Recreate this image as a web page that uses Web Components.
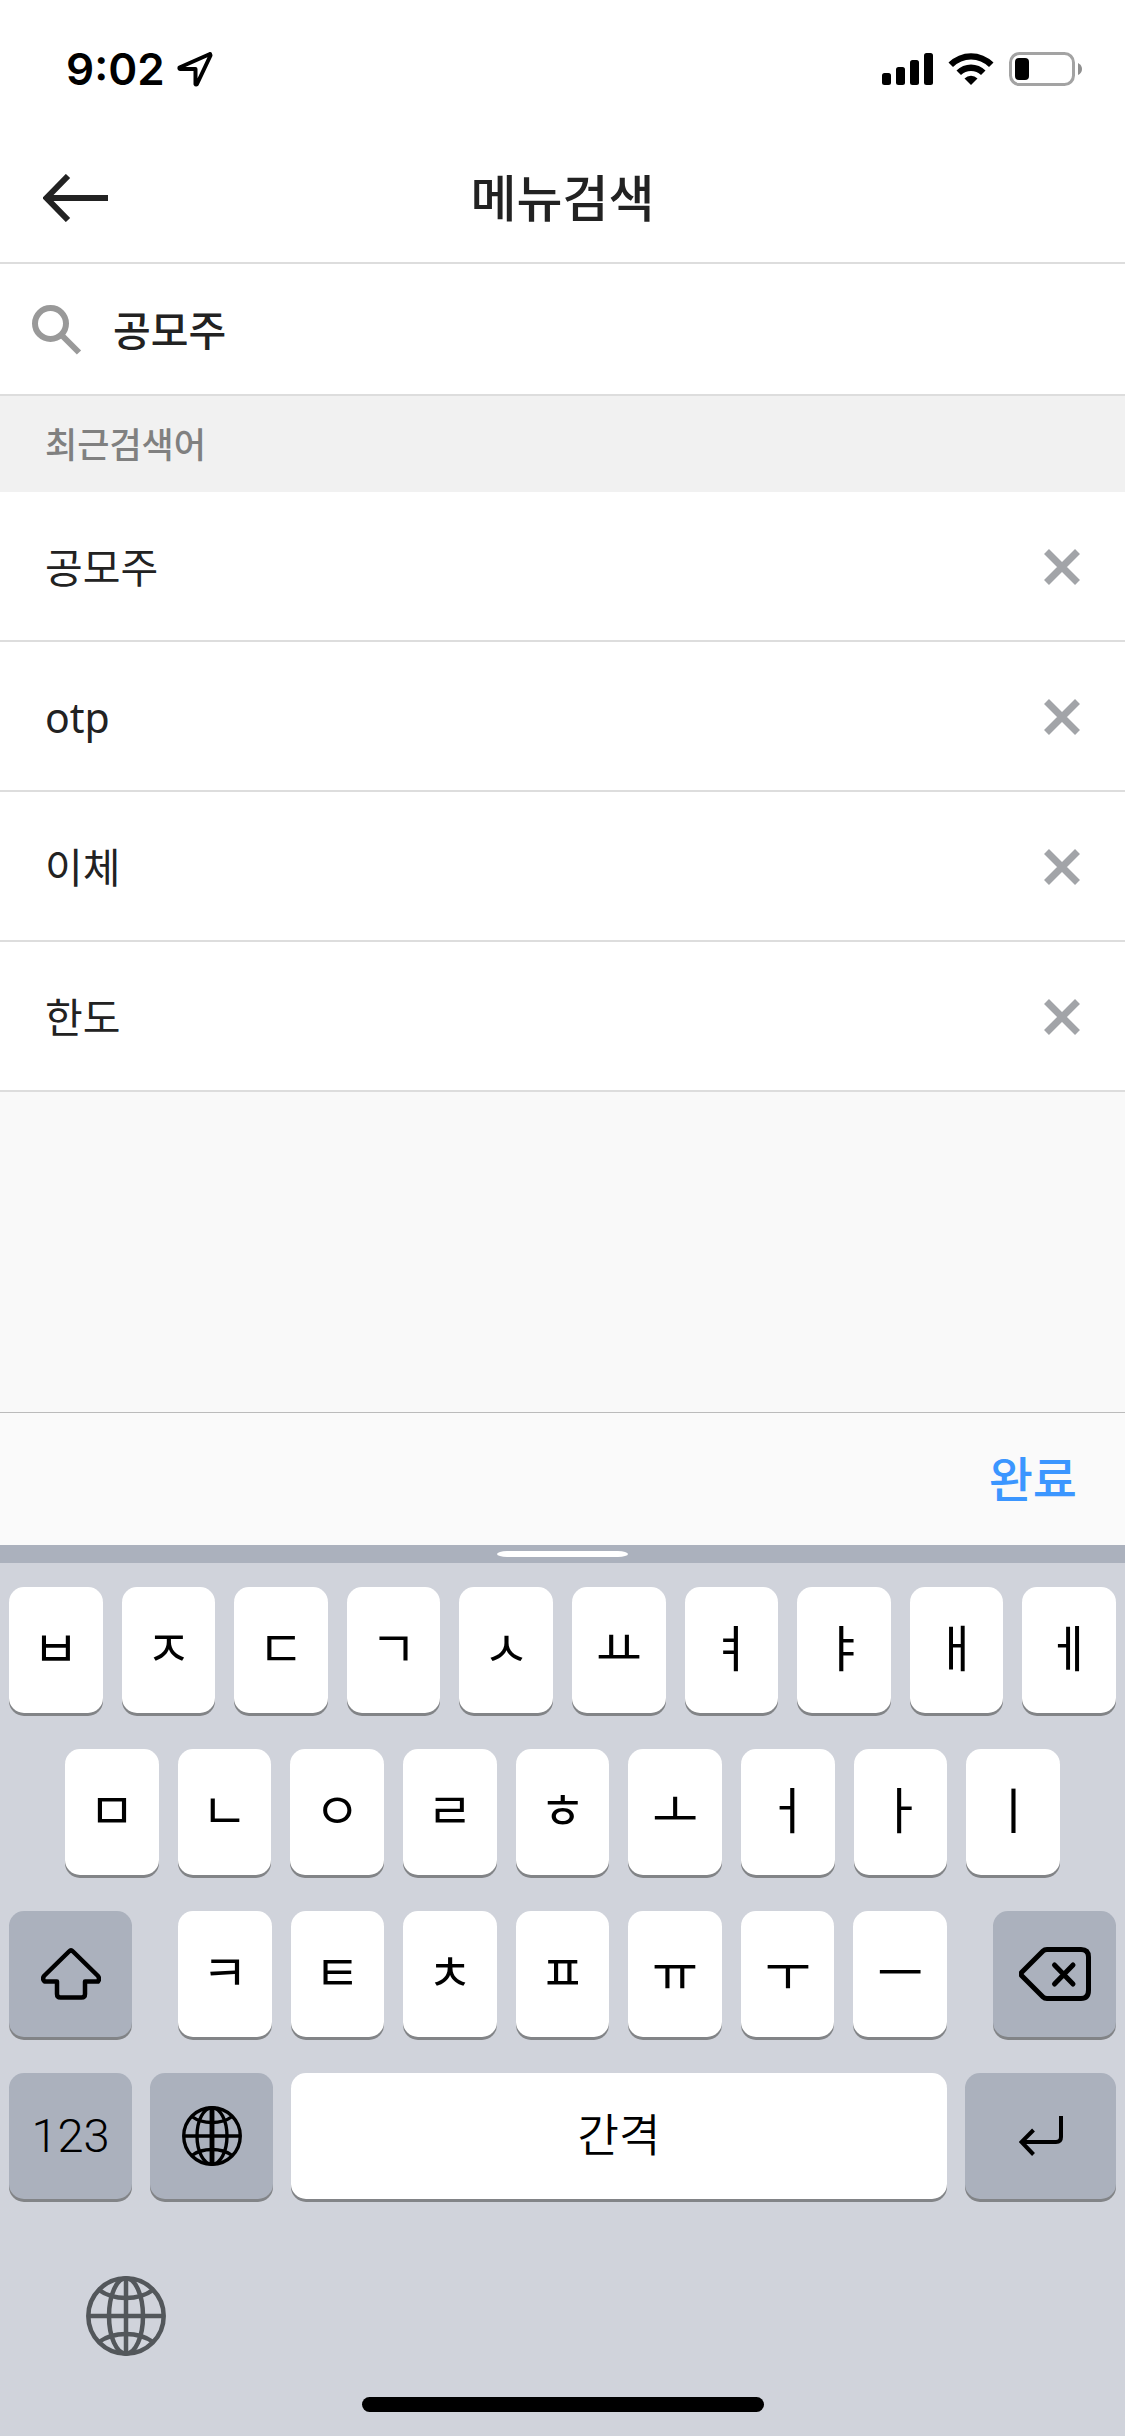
<!DOCTYPE html>
<html lang="ko">
<head>
<meta charset="utf-8">
<meta name="viewport" content="width=device-width, initial-scale=1">
<title>메뉴검색</title>
<style>
  html, body { margin: 0; }
  body {
    min-height: 100vh;
    display: flex;
    flex-direction: column;
    background: #f9f9f9;
    color: #222;
    font-family: "Noto Sans", "Noto Sans CJK KR", sans-serif;
  }
  recent-searches { flex: 1; }
</style>
</head>
<body>
  <status-bar time="9:02"></status-bar>
  <nav-header>메뉴검색</nav-header>
  <search-field value="공모주"></search-field>
  <recent-searches heading="최근검색어">
    <recent-item>공모주</recent-item>
    <recent-item>otp</recent-item>
    <recent-item>이체</recent-item>
    <recent-item>한도</recent-item>
  </recent-searches>
  <input-toolbar>완료</input-toolbar>
  <soft-keyboard></soft-keyboard>

<script>
  class BaseElement extends HTMLElement {
    connectedCallback() {
      if (this.shadowRoot) return;
      this.attachShadow({ mode: "open" }).innerHTML =
        `<style>
          *, :host { box-sizing: border-box; }
          :host { display: block; }
          svg { display: block; }
          button { border: 0; padding: 0; margin: 0; background: none; color: inherit; font: inherit; }
        </style>` + this.render();
    }
  }

  customElements.define("status-bar", class extends BaseElement {
    render() {
      return `<style>
        :host { background: #fff; padding: 44px 43px 0 66px; height: 134px; color: #000; }
        .bar { display: flex; align-items: center; height: 50px; }
        time { font: 600 44px/50px Inter, sans-serif; }
        .place { margin-left: 12px; }
        .system { margin-left: auto; display: flex; align-items: center; gap: 15px; }
      </style>
      <div class="bar">
        <time>${this.getAttribute("time")}</time>
        <svg class="place" width="36" height="36" viewBox="0 0 36 36" fill="none" stroke="#000" stroke-width="4" stroke-linejoin="round" aria-hidden="true">
          <path d="M33 3 2.500 16.500Q2 18 3.500 18H18.500V33Q19 34 20 33L33.500 4.500Z"/>
        </svg>
        <div class="system">
          <svg width="51" height="34" viewBox="0 0 51 34" aria-hidden="true">
            <rect x="0" y="21" width="9" height="12" rx="2.500"/><rect x="14" y="15" width="9" height="18" rx="2.500"/>
            <rect x="28" y="8" width="9" height="25" rx="2.500"/><rect x="42" y="1" width="9" height="32" rx="2.500"/>
          </svg>
          <svg width="46" height="34" viewBox="0 0 46 34" aria-hidden="true">
            <path d="M0.500 10.500A32 32 0 0 1 45.500 10.500L41 15A25.500 25.500 0 0 0 5 15Z"/>
            <path d="M8.500 18.500A20.500 20.500 0 0 1 37.500 18.500L33 23A14.200 14.200 0 0 0 13 23Z"/>
            <path d="M16.500 26.500A9.200 9.200 0 0 1 29.500 26.500L23 33Z"/>
          </svg>
          <svg width="73" height="34" viewBox="0 0 73 34" aria-hidden="true">
            <rect x="1.500" y="1.500" width="63" height="31" rx="9" fill="none" stroke="#a3a3a3" stroke-width="3"/>
            <rect x="6" y="6" width="14" height="22" rx="4"/>
            <path d="M69 11Q73 13 73 17T69 23Z" fill="#8f8f8f"/>
          </svg>
        </div>
      </div>`;
    }
  });

  customElements.define("nav-header", class extends BaseElement {
    render() {
      return `<style>
        :host { background: #fff; border-bottom: 2px solid #ddd; }
        header { display: grid; grid-template-columns: 1fr auto 1fr; align-items: center; height: 128px; padding: 0 43px; }
        h1 { margin: 0; font-size: 50px; line-height: 60px; font-weight: 500; }
      </style>
      <header>
        <button aria-label="뒤로"><svg width="66" height="48" viewBox="0 0 66 48" fill="none" stroke="#222" stroke-width="6" aria-hidden="true"><path d="M65 24H4M25 2 3.500 24 25 46"/></svg></button>
        <h1><slot></slot></h1>
      </header>`;
    }
  });

  customElements.define("search-field", class extends BaseElement {
    render() {
      return `<style>
        :host { background: #fff; border-bottom: 2px solid #ddd; }
        label { display: flex; align-items: center; gap: 31px; height: 130px; padding: 2px 32px 0; }
        input { flex: 1; min-width: 0; border: 0; padding: 0; outline: 0; background: none; color: #222;
          font-family: inherit; font-size: 41px; line-height: 60px; font-weight: 500; }
      </style>
      <label>
        <svg width="50" height="50" viewBox="0 0 50 50" fill="none" stroke="#999" stroke-width="6" role="img" aria-label="검색">
          <circle cx="18.500" cy="18.500" r="15.500"/><path d="M29.500 30 47 47.500"/>
        </svg>
        <input type="text" value="${this.getAttribute("value")}">
      </label>`;
    }
  });

  customElements.define("recent-searches", class extends BaseElement {
    render() {
      return `<style>
        h2 { margin: 0; padding: 2px 45px 0; background: #f1f1f1; color: #808080; font-size: 35px; line-height: 94px; font-weight: 500; }
      </style>
      <h2>${this.getAttribute("heading")}</h2>
      <div role="list"><slot></slot></div>`;
    }
  });

  customElements.define("recent-item", class extends BaseElement {
    render() {
      return `<style>
        .row { display: flex; justify-content: space-between; align-items: center; height: 150px; padding: 2px 45px 0;
          background: #fff; border-bottom: 2px solid #ddd; font-size: 41px; line-height: 60px; }
      </style>
      <div class="row" role="listitem">
        <span><slot></slot></span>
        <button aria-label="삭제"><svg width="36" height="36" viewBox="0 0 36 36" stroke="#a2a4a8" stroke-width="7" aria-hidden="true"><path d="M2.500 2.500 33.500 33.500M33.500 2.500 2.500 33.500"/></svg></button>
      </div>`;
    }
  });

  customElements.define("input-toolbar", class extends BaseElement {
    render() {
      return `<style>
        :host { background: #fafafa; border-top: 1px solid #bbb; }
        div { display: flex; justify-content: flex-end; align-items: center; height: 132px; padding: 0 48px; }
        button { color: #3b96ff; font-size: 48px; line-height: 60px; font-weight: 500; }
      </style>
      <div><button><slot></slot></button></div>`;
    }
  });

  customElements.define("key-cap", class extends BaseElement {
    render() {
      return `<style>
        button { display: flex; justify-content: center; align-items: center; width: 100%; height: 126px;
          border-radius: 15px; background: #fff; box-shadow: 0 3px 0 #828487; color: #000;
          font: 400 50px/60px "Noto Sans CJK KR", sans-serif; padding-bottom: 10px; }
        :host([dark]) button { background: #abb1bd; padding-bottom: 0; }
        :host([type="word"]) button { font-weight: 350; font-size: 45px; padding-bottom: 6px; }
        :host([type="digits"]) button { font: 300 47px/60px Roboto, sans-serif; }
      </style>
      <button aria-label="${this.getAttribute("label") || this.textContent}"><slot></slot></button>`;
    }
  });

  customElements.define("globe-icon", class extends BaseElement {
    render() {
      const large = this.hasAttribute("large");
      return `<style>:host { width: 60px; } :host([large]) { width: 80px; }</style>
      <svg viewBox="0 0 80 80" fill="none" stroke="currentColor" stroke-width="4.500" aria-hidden="true">
        <circle cx="40" cy="40" r="37.700"/>
        <path d="M40 2V78" stroke-width="${large ? 4.5 : 6.5}"/>
        <path d="M2 40H78M13 14Q24 22 40 22T67 14M13 66Q24 58 40 58T67 66"/>
        <ellipse cx="40" cy="40" rx="${large ? 17 : 20}" ry="37.700"/>
      </svg>`;
    }
  });

  const caps = letters => [...letters].map(c => `<key-cap>${c}</key-cap>`).join("");

  customElements.define("soft-keyboard", class extends BaseElement {
    render() {
      return `<style>
        :host { background: #d0d3db; color: #000; }
        .grip { display: flex; justify-content: center; align-items: center; height: 18px; background: #abb1bd; }
        .grip i { width: 131px; height: 6px; border-radius: 10px / 3px; background: #fff; }
        .keys { padding: 24px 9px 0; display: flex; flex-direction: column; gap: 36px; }
        .row, .group { display: flex; gap: 19px; }
        .row key-cap { flex: 1 1 0; }
        .row .side { flex: 0 0 123px; }
        .row .enter { flex: 0 0 151px; }
        .inset { padding: 0 56px; }
        .group { flex: 1; margin: 0 27px; }
        .bottom { gap: 18px; }
        .foot { padding: 77px 86px 41px; color: #53575b; }
        .foot button { display: block; }
        .home { width: 402px; height: 15px; margin: 0 auto; border-radius: 8px; background: #000; }
        .end { padding-bottom: 24px; }
      </style>
      <div class="grip"><i></i></div>
      <div class="keys">
        <div class="row">${caps("ㅂㅈㄷㄱㅅㅛㅕㅑㅐㅔ")}</div>
        <div class="row inset">${caps("ㅁㄴㅇㄹㅎㅗㅓㅏㅣ")}</div>
        <div class="row">
          <key-cap class="side" dark label="Shift"><svg width="60" height="52" viewBox="0 0 60 52" fill="none" stroke="#000" stroke-width="4.500" stroke-linejoin="round" aria-hidden="true"><path d="M28 3.500Q30 1.500 32 3.500L57 28Q59 31 57 33.500H44V46Q44 49.500 40.500 49.500H19.500Q16 49.500 16 46V33.500H3.500Q1 31 3 28Z"/></svg></key-cap>
          <div class="group">${caps("ㅋㅌㅊㅍㅠㅜㅡ")}</div>
          <key-cap class="side" dark label="지우기"><svg width="72" height="54" viewBox="0 0 72 54" fill="none" stroke="#000" stroke-width="5" stroke-linejoin="round" aria-hidden="true"><path d="M3 25 24 4Q25.500 2.500 28 2.500H62Q69.500 2.500 69.500 10V43Q69.500 51.500 62 51.500H28Q25.500 51.500 24 50L3 29Q1 27 3 25Z"/><path d="M35.500 18 54 37M54 18 35.500 37" stroke-linecap="round"/></svg></key-cap>
        </div>
        <div class="row bottom">
          <key-cap class="side" dark type="digits">123</key-cap>
          <key-cap class="side" dark label="다음 키보드"><globe-icon></globe-icon></key-cap>
          <key-cap type="word">간격</key-cap>
          <key-cap class="enter" dark label="입력"><svg width="44" height="40" viewBox="0 0 44 40" fill="none" stroke="#000" stroke-width="4" aria-hidden="true"><path d="M42 0V21Q42 26 37 26H3M14.500 14 2.500 26 14.500 38.500"/></svg></key-cap>
        </div>
      </div>
      <div class="foot"><button aria-label="키보드 변경"><globe-icon large></globe-icon></button></div>
      <div class="end"><div class="home"></div></div>`;
    }
  });
</script>
</body>
</html>
